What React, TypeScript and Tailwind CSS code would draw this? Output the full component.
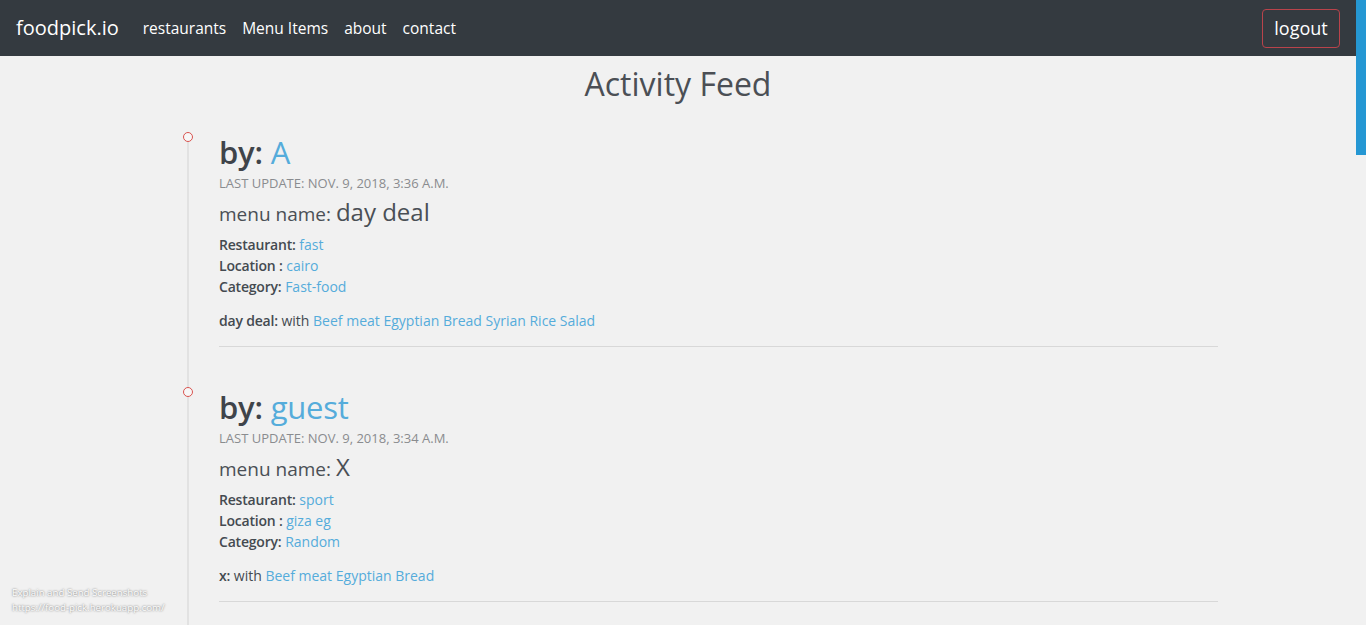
import React from "react";

type Post = {
  by: string;
  updated: string;
  menu: string;
  restaurant: string;
  location: string;
  category: string;
  items: string;
};

const posts: Post[] = [
  {
    by: "A",
    updated: "Nov. 9, 2018, 3:36 a.m.",
    menu: "day deal",
    restaurant: "fast",
    location: "cairo",
    category: "Fast-food",
    items: "Beef meat Egyptian Bread Syrian Rice Salad",
  },
  {
    by: "guest",
    updated: "Nov. 9, 2018, 3:34 a.m.",
    menu: "X",
    restaurant: "sport",
    location: "giza eg",
    category: "Random",
    items: "Beef meat Egyptian Bread",
  },
];

const FeedItem: React.FC<{ post: Post }> = ({ post }) => {
  return (
    <div className="relative pl-[30px] mb-[40px]">
      {/* timeline dot */}
      <span className="absolute left-[-6px] top-0 w-[10px] h-[10px] rounded-full border border-[#d9534f] bg-[#f7f7f7]"></span>
      <h2 className="text-[31px] leading-[38px] font-semibold text-[#3f444a] pt-px tracking-[-0.2px]">
        by: <span className="font-normal text-[#55acdb]">{post.by}</span>
      </h2>
      <p className="mt-[2px] text-[13px] leading-[20px] uppercase text-[#8a8c8f]">Last update: {post.updated}</p>
      <h3 className="mt-[5px] text-[24px] leading-[1.2] text-[#4a4f55]">
        <span className="text-[19px]">menu name: </span>
        {post.menu}
      </h3>
      <div className="mt-[7px] text-[14px] leading-[21px] text-[#444a50]">
        <p>
          <span className="font-semibold tracking-[-0.2px]">Restaurant:</span> <a className="text-[#55acdb]">{post.restaurant}</a>
        </p>
        <p>
          <span className="font-semibold tracking-[-0.2px]">Location :</span> <a className="text-[#55acdb]">{post.location}</a>
        </p>
        <p>
          <span className="font-semibold tracking-[-0.2px]">Category:</span> <a className="text-[#55acdb]">{post.category}</a>
        </p>
        <p className="mt-[13px]">
          <span className="font-semibold tracking-[-0.2px]">{post.menu.toLowerCase()}:</span> with{" "}
          <a className="text-[#55acdb]">{post.items}</a>
        </p>
      </div>
      <hr className="mt-[15px] border-t border-[#d8d8d8]" />
    </div>
  );
};

const App: React.FC = () => {
  return (
    <div className="relative flex h-[625px] overflow-hidden bg-[#f1f1f1] font-['Open_Sans',sans-serif]">
      <div className="w-[1356px] shrink-0">
        <nav className="h-[56px] bg-[#343a40] flex items-center px-4">
          <span className="text-[20px] text-white mr-[16px]">foodpick.io</span>
          <ul className="flex pt-[2px] text-[15.5px] text-white">
            <li className="px-2">restaurants</li>
            <li className="px-2">Menu Items</li>
            <li className="px-2">about</li>
            <li className="px-2">contact</li>
          </ul>
          <button className="ml-auto h-[39px] w-[78px] rounded border border-[#b9434b] text-[18px] text-white">logout</button>
        </nav>

        <h1 className="mt-[9px] text-center text-[32px] leading-[1.2] text-[#4b4f55]">Activity Feed</h1>

        <div className="ml-[187px] mt-[29px] w-[1031px] border-l-2 border-[#e2e2e2] pb-10">
          {posts.map((p) => (
            <FeedItem key={p.by} post={p} />
          ))}
        </div>
      </div>

      {/* scrollbar */}
      <div className="w-[10px] bg-[#f1f1f1]">
        <div className="h-[155px] bg-[#2597d3]"></div>
      </div>

      {/* screenshot extension overlay */}
      <div className="absolute left-[12px] bottom-[10px] text-[9.7px] leading-[15px] text-white [text-shadow:0_0_2px_#555]">
        <p>Explain and Send Screenshots</p>
        <p>https://food-pick.herokuapp.com/</p>
      </div>
    </div>
  );
};

export default App;
